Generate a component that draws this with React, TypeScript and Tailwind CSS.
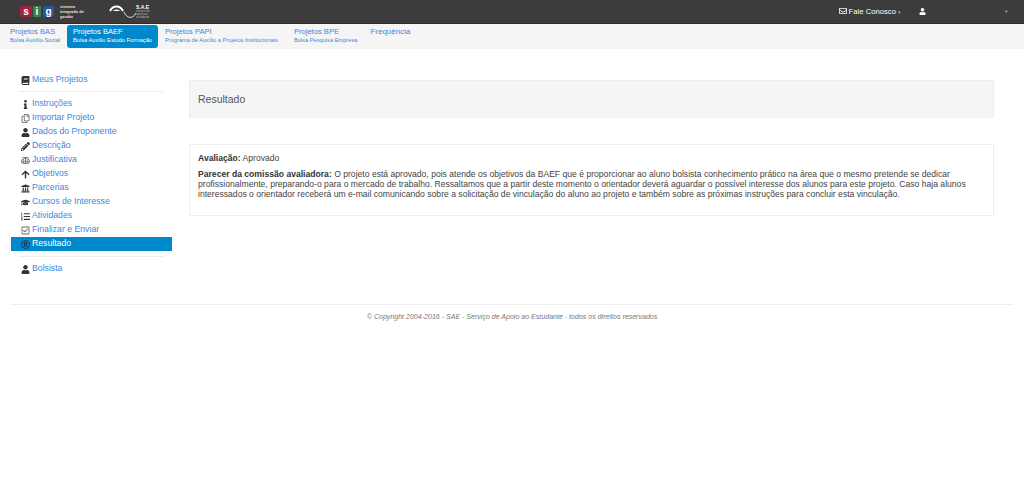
import {
  FaArrowUp,
  FaBalanceScale,
  FaBook,
  FaGraduationCap,
  FaInfo,
  FaListOl,
  FaPencilAlt,
  FaRegCheckSquare,
  FaRegCopy,
  FaRegEnvelope,
  FaRegRegistered,
  FaUniversity,
  FaUser,
} from "react-icons/fa";
import type { IconType } from "react-icons";

const tabs = [
  { title: "Projetos BAS", sub: "Bolsa Auxílio-Social", pad: "px-[7px]" },
  { title: "Projetos BAEF", sub: "Bolsa Auxílio Estudo Formação", pad: "px-[6px]", active: true },
  { title: "Projetos PAPI", sub: "Programa de Auxílio a Projetos Institucionais", pad: "pl-[7px] pr-[9px]" },
  { title: "Projetos BPE", sub: "Bolsa Pesquisa Empresa", pad: "pl-[7px] pr-[6px]" },
  { title: "Frequência", sub: "", pad: "px-[7px]" },
];

const steps: { label: string; icon: IconType; active?: boolean; muted?: boolean }[] = [
  { label: "Instruções", icon: FaInfo },
  { label: "Importar Projeto", icon: FaRegCopy, muted: true },
  { label: "Dados do Proponente", icon: FaUser },
  { label: "Descrição", icon: FaPencilAlt },
  { label: "Justificativa", icon: FaBalanceScale, muted: true },
  { label: "Objetivos", icon: FaArrowUp },
  { label: "Parcerias", icon: FaUniversity },
  { label: "Cursos de Interesse", icon: FaGraduationCap },
  { label: "Atividades", icon: FaListOl },
  { label: "Finalizar e Enviar", icon: FaRegCheckSquare, muted: true },
  { label: "Resultado", icon: FaRegRegistered, active: true },
];

function SideItem({
  label,
  icon: Icon,
  active,
  muted,
}: {
  label: string;
  icon: IconType;
  active?: boolean;
  muted?: boolean;
}) {
  let iconColor = "text-[#333333]";
  if (active) iconColor = "text-[#12395a]";
  if (muted) iconColor = "text-[#666666]";

  return (
    <a
      className={
        active
          ? "flex h-[14px] items-center bg-[#0088cc] pl-[8px] text-white"
          : "flex h-[14px] items-center pl-[8px] text-[#3d87dd]"
      }
    >
      <span className={`flex w-[12px] justify-center ${iconColor}`}>
        <Icon size={9} />
      </span>
      <span className="ml-[1px]">{label}</span>
    </a>
  );
}

export default function App() {
  return (
    <div className="min-h-[487px] bg-white font-['Liberation_Sans',Arial,sans-serif] text-[8.7px] text-[#444444]">
      {/* Top bar */}
      <header className="flex h-[24px] items-center justify-between border-b border-[#2b2b2b] bg-[#3c3c3c] pl-[20px] pr-[16px] text-white">
        <div className="flex items-center">
          <div className="flex h-[13px] items-center gap-[1px] text-[10px] font-bold leading-none">
            <span className="flex h-[11px] w-[12px] items-center justify-center rounded-[2px] bg-[#a3213f]">s</span>
            <span className="flex h-[11px] w-[8px] items-center justify-center bg-[#3c7d4a]">i</span>
            <span className="ml-[1px] flex h-[11px] w-[11px] items-center justify-center rounded-[2px] bg-[#27569c]">g</span>
          </div>
          <div className="ml-[6px] flex flex-col text-[4px] font-bold leading-[5px] text-[#e5e5e5]">
            <span>sistema</span>
            <span>integrado de</span>
            <span>gestão</span>
          </div>
          <svg className="ml-[25px]" width="34" height="16" viewBox="0 0 34 16" fill="none">
            <path d="M1 7 C4 1 11 1 14 7" stroke="#ffffff" strokeWidth="2" />
            <path d="M4 7 C6 5 9 5 11 7 Z" fill="#ffffff" />
            <path d="M15 8 C18 15 24 15 27 9" stroke="#e0e0e0" strokeWidth="1" />
          </svg>
          <div className="-ml-[7px] flex flex-col leading-none">
            <span className="text-[5px] font-bold">S.A.E</span>
            <span className="text-[3px] leading-[3px] text-[#bbbbbb]">serviço de</span>
            <span className="text-[3px] leading-[3px] text-[#bbbbbb]">apoio ao</span>
            <span className="text-[3px] leading-[3px] text-[#bbbbbb]">estudante</span>
          </div>
        </div>
        <div className="flex items-center">
          <span className="flex items-center gap-[2px] text-[7.7px]">
            <FaRegEnvelope size={8} />
            Fale Conosco
            <span className="mt-[2px] text-[5px] leading-none text-[#aaaaaa]">▾</span>
          </span>
          <FaUser size={7} className="ml-[18px]" />
          <span className="ml-[79px] text-[5px] leading-none text-[#aaaaaa]">▾</span>
        </div>
      </header>

      {/* Module tabs */}
      <nav className="flex h-[25px] items-center bg-[#f5f5f5] pl-[3px]">
        {tabs.map((t) => (
          <a
            key={t.title}
            className={
              t.active
                ? `flex h-[23px] flex-col rounded-[3px] bg-[#0088cc] pt-[2px] text-white ${t.pad}`
                : `flex h-[23px] flex-col pt-[2px] text-[#3d87dd] ${t.pad}`
            }
          >
            <span className={t.sub ? "text-[7.6px] leading-[10px]" : "text-[8px] leading-[10px]"}>{t.title}</span>
            {t.sub && <span className="whitespace-nowrap text-[5.7px] leading-[7px]">{t.sub}</span>}
          </a>
        ))}
      </nav>

      <div className="mx-[11px] flex pt-[22px]">
        {/* Sidebar */}
        <aside className="w-[161px] shrink-0">
          <div className="pt-[2px]">
            <SideItem label="Meus Projetos" icon={FaBook} />
          </div>
          <hr className="mx-[8px] mb-[5px] mt-[4px] border-[#eeeeee]" />
          <div>
            {steps.map((s) => (
              <SideItem key={s.label} {...s} />
            ))}
          </div>
          <hr className="mx-[8px] my-[5px] border-[#eeeeee]" />
          <SideItem label="Bolsista" icon={FaUser} />
        </aside>

        {/* Main */}
        <main className="ml-[17px] w-[805px] pt-[9px]">
          <div className="flex h-[38px] items-center border border-[#eeeeee] bg-[#f5f5f5] pl-[8px] pt-[1px] text-[10.5px] text-[#555555]">
            Resultado
          </div>
          <section className="mt-[26px] h-[72px] border border-[#eeeeee] px-[8px] pt-[8px] text-[8.6px] leading-[10px]">
            <p className="mb-[6px]">
              <b className="text-[#333333]">Avaliação:</b> Aprovado
            </p>
            <p>
              <b className="text-[#333333]">Parecer da comissão avaliadora:</b> O projeto está aprovado, pois atende os objetivos da BAEF que é proporcionar ao aluno bolsista conhecimento prático na área que o mesmo pretende se dedicar profissionalmente, preparando-o para o mercado de trabalho. Ressaltamos que a partir deste momento o orientador deverá aguardar o possível interesse dos alunos para este projeto. Caso haja alunos interessados o orientador receberá um e-mail comunicando sobre a solicitação de vinculação do aluno ao projeto e também sobre as próximas instruções para concluir esta vinculação.
            </p>
          </section>
        </main>
      </div>

      <footer className="mx-[11px] mt-[28px] border-t border-[#eeeeee] pt-[7px] text-center text-[7.05px] italic text-[#777777]">
        © Copyright 2004-2016 - SAE - Serviço de Apoio ao Estudante - todos os direitos reservados
      </footer>
    </div>
  );
}
